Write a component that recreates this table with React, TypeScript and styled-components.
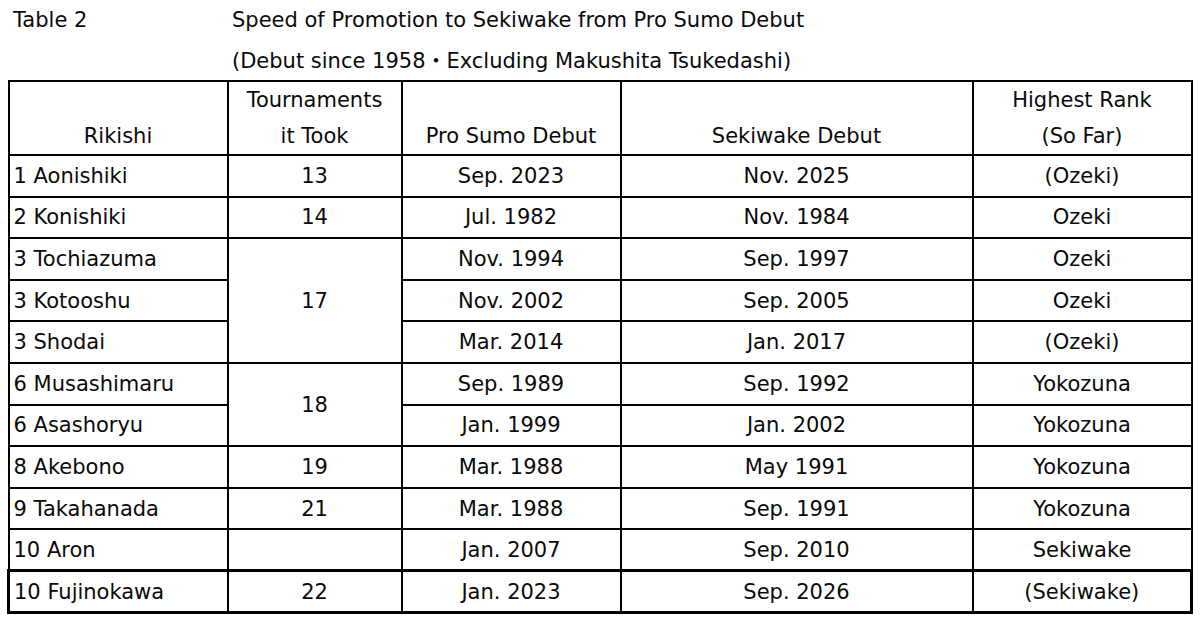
import React from "react";
import styled, { createGlobalStyle, css } from "styled-components";

const Global = createGlobalStyle`
  html, body { margin: 0; padding: 0; background: #fff; }
  body {
    font-family: "DejaVu Sans", "Noto Sans CJK JP", sans-serif;
    color: #0a0a0a;
    font-size: 21px;
  }
`;

const Page = styled.div`
  width: 1200px;
  height: 621px;
  padding: 0 0 0 7px;
  box-sizing: border-box;
`;

const Heading = styled.div`
  display: grid;
  grid-template-columns: 225px 1fr;
  line-height: 41px;
  height: 80px;
`;

const Label = styled.div`
  padding-left: 6px;
  line-height: 40px;
`;

const Titles = styled.div`
  display: flex;
  flex-direction: column;
`;

const Table = styled.table`
  border-collapse: collapse;
  table-layout: fixed;
  width: 1183px;
  border: 2px solid #000;
`;

const HeadCell = styled.th`
  font-weight: normal;
  border: 2px solid #000;
  text-align: center;
  vertical-align: bottom;
  line-height: 36px;
  padding: 0;
`;

const Cell = styled.td<{ $left?: boolean; $strong?: boolean; $first?: boolean; $last?: boolean }>`
  border: 2px solid #000;
  text-align: ${(p) => (p.$left ? "left" : "center")};
  padding: 0 0 0 ${(p) => (p.$left ? "4px" : "0")};
  vertical-align: middle;
  line-height: 24px;
  ${(p) =>
    p.$strong &&
    css`
      border-top-width: 3.5px;
      border-bottom-width: 3.5px;
    `}
  ${(p) => p.$strong && p.$first && css`border-left-width: 3.5px;`}
  ${(p) => p.$strong && p.$last && css`border-right-width: 3.5px;`}
`;

const Row = styled.tr`
  height: 41.6px;
`;

const HeadRow = styled.tr`
  height: 69.5px;
`;

type R = {
  name: string;
  took?: string;
  span?: number;
  skip?: boolean;
  debut: string;
  seki: string;
  rank: string;
};

const rows: R[] = [
  { name: "1 Aonishiki", took: "13", debut: "Sep. 2023", seki: "Nov. 2025", rank: "(Ozeki)" },
  { name: "2 Konishiki", took: "14", debut: "Jul. 1982", seki: "Nov. 1984", rank: "Ozeki" },
  { name: "3 Tochiazuma", took: "17", span: 3, debut: "Nov. 1994", seki: "Sep. 1997", rank: "Ozeki" },
  { name: "3 Kotooshu", skip: true, debut: "Nov. 2002", seki: "Sep. 2005", rank: "Ozeki" },
  { name: "3 Shodai", skip: true, debut: "Mar. 2014", seki: "Jan. 2017", rank: "(Ozeki)" },
  { name: "6 Musashimaru", took: "18", span: 2, debut: "Sep. 1989", seki: "Sep. 1992", rank: "Yokozuna" },
  { name: "6 Asashoryu", skip: true, debut: "Jan. 1999", seki: "Jan. 2002", rank: "Yokozuna" },
  { name: "8 Akebono", took: "19", debut: "Mar. 1988", seki: "May 1991", rank: "Yokozuna" },
  { name: "9 Takahanada", took: "21", debut: "Mar. 1988", seki: "Sep. 1991", rank: "Yokozuna" },
  { name: "10 Aron", took: "", debut: "Jan. 2007", seki: "Sep. 2010", rank: "Sekiwake" },
];

export default function App() {
  return (
    <Page>
      <Global />
      <Heading>
        <Label>Table 2</Label>
        <Titles>
          <span>Speed of Promotion to Sekiwake from Pro Sumo Debut</span>
          <span>(Debut since 1958・Excluding Makushita Tsukedashi)</span>
        </Titles>
      </Heading>
      <Table>
        <colgroup>
          <col style={{ width: 219 }} />
          <col style={{ width: 174 }} />
          <col style={{ width: 219 }} />
          <col style={{ width: 352 }} />
          <col style={{ width: 219 }} />
        </colgroup>
        <thead>
          <HeadRow>
            <HeadCell>Rikishi</HeadCell>
            <HeadCell>
              Tournaments
              <br />
              it Took
            </HeadCell>
            <HeadCell>Pro Sumo Debut</HeadCell>
            <HeadCell>Sekiwake Debut</HeadCell>
            <HeadCell>
              Highest Rank
              <br />
              (So Far)
            </HeadCell>
          </HeadRow>
        </thead>
        <tbody>
          {rows.map((r) => (
            <Row key={r.name}>
              <Cell $left>{r.name}</Cell>
              {!r.skip && <Cell rowSpan={r.span ?? 1}>{r.took}</Cell>}
              <Cell>{r.debut}</Cell>
              <Cell>{r.seki}</Cell>
              <Cell>{r.rank}</Cell>
            </Row>
          ))}
          <Row>
            <Cell $left $strong $first>10 Fujinokawa</Cell>
            <Cell $strong>22</Cell>
            <Cell $strong>Jan. 2023</Cell>
            <Cell $strong>Sep. 2026</Cell>
            <Cell $strong $last>(Sekiwake)</Cell>
          </Row>
        </tbody>
      </Table>
    </Page>
  );
}
